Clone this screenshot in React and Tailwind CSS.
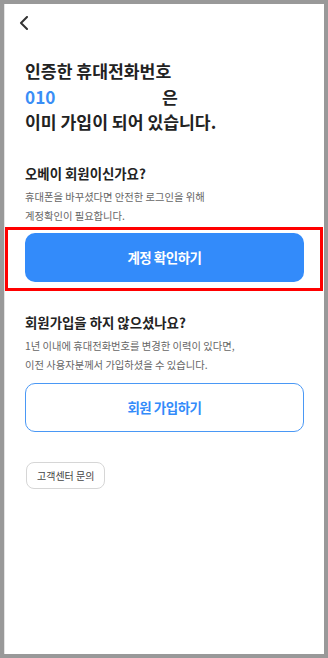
import React from 'react';

const font = { fontFamily: '"Noto Sans CJK KR", "Noto Sans", sans-serif' };

const BackIcon = () => (
  <svg width="10" height="14" viewBox="0 0 10 14" fill="none">
    <path d="M8 1 L2 7 L8 13" stroke="#333" strokeWidth="2" strokeLinecap="round" strokeLinejoin="round" />
  </svg>
);

export default function App() {
  return (
    <div className="w-[328px] h-[658px] bg-[#999999] p-[4px]" style={font}>
      <div className="relative h-full bg-white border-l border-[#e4e4e4] flex flex-col">
        {/* 상단 뒤로가기 */}
        <div className="pl-[14px] pt-[12px]">
          <BackIcon />
        </div>

        <div className="px-[20px] flex flex-col">
          <h1 className="mt-[28px] text-[17.2px] leading-[25.5px] font-bold text-[#222]">
            <span>인증한 휴대전화번호</span>
            <br />
            <span className="inline-block w-[137px] text-[#3a8ef6]">010</span>
            <span>은</span>
            <br />
            <span>이미 가입이 되어 있습니다.</span>
          </h1>

          {/* 기존 회원 */}
          <h2 className="mt-[29px] text-[13.4px] leading-[18px] font-bold text-[#222]">
            오베이 회원이신가요?
          </h2>
          <p className="mt-[5px] text-[10.3px] leading-[19px] text-[#666]">
            휴대폰을 바꾸셨다면 안전한 로그인을 위해
            <br />
            계정확인이 필요합니다.
          </p>
          <button
            type="button"
            className="mt-[8px] h-[49px] w-full rounded-[10px] bg-[#338bfa] text-white text-[13.5px] font-bold tracking-[-0.5px]"
          >
            계정 확인하기
          </button>

          {/* 신규 가입 */}
          <h2 className="mt-[31px] text-[13.4px] leading-[18px] font-bold text-[#222]">
            회원가입을 하지 않으셨나요?
          </h2>
          <p className="mt-[5px] text-[10.3px] leading-[19px] text-[#666]">
            1년 이내에 휴대전화번호를 변경한 이력이 있다면,
            <br />
            이전 사용자분께서 가입하셨을 수 있습니다.
          </p>
          <button
            type="button"
            className="mt-[9px] h-[49px] w-full rounded-[10px] border border-[#4a98f5] bg-white text-[#338bfa] text-[13.5px] font-bold tracking-[-0.5px]"
          >
            회원 가입하기
          </button>

          <div className="mt-[29px]">
            <button
              type="button"
              className="ml-[1px] h-[27px] px-[10px] rounded-[8px] border border-[#d6d6d6] bg-white text-[10px] text-[#444]"
            >
              고객센터 문의
            </button>
          </div>
        </div>

        {/* 강조 표시 */}
        <div className="absolute left-0 right-[1px] top-[223px] h-[64px] border-[3px] border-[#ff0000] pointer-events-none" />
      </div>
    </div>
  );
}
